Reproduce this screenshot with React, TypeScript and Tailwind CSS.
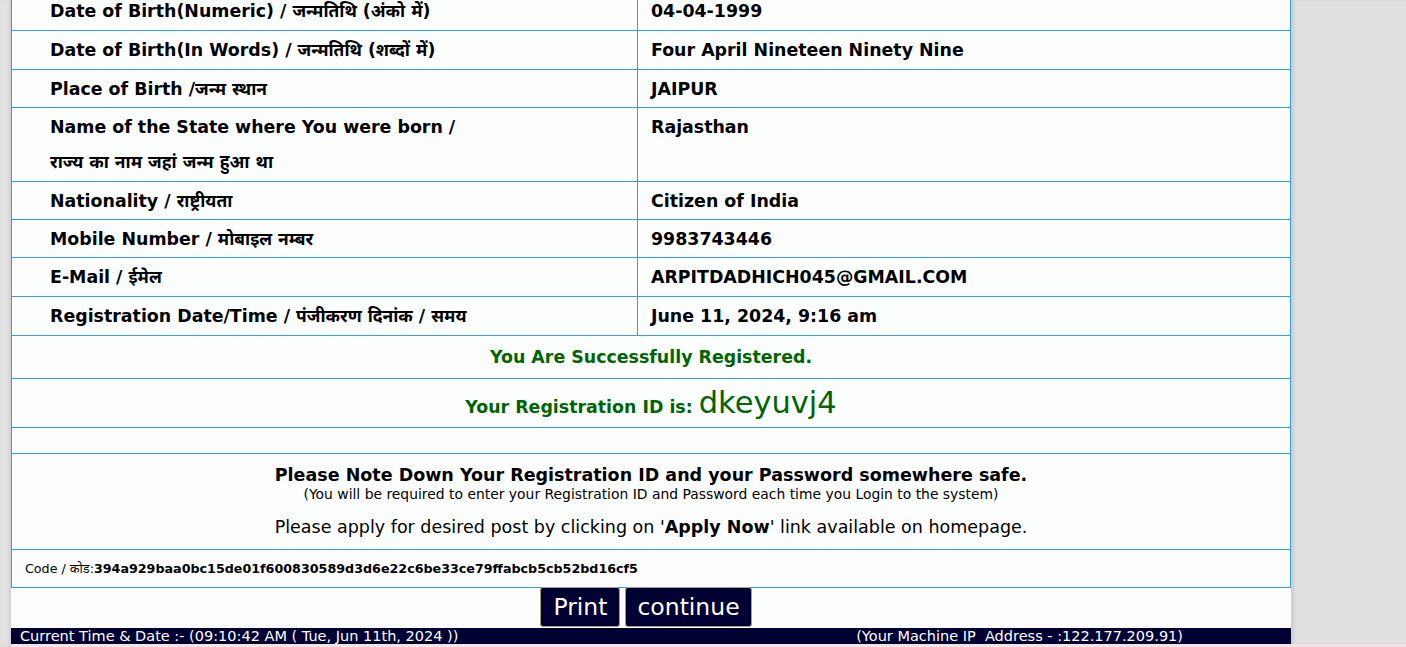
import React from 'react';

interface Row {
  label: React.ReactNode;
  value: string;
  h: string;
}

const rows: Row[] = [
  { label: 'Date of Birth(Numeric) / जन्मतिथि (अंको में)', value: '04-04-1999', h: 'h-[39px]' },
  { label: 'Date of Birth(In Words) / जन्मतिथि (शब्दों में)', value: 'Four April Nineteen Ninety Nine', h: 'h-[39px]' },
  { label: 'Place of Birth /जन्म स्थान', value: 'JAIPUR', h: 'h-[38px]' },
  {
    label: (
      <>
        Name of the State where You were born /<br />
        राज्य का नाम जहां जन्म हुआ था
      </>
    ),
    value: 'Rajasthan',
    h: 'h-[74px]',
  },
  { label: 'Nationality / राष्ट्रीयता', value: 'Citizen of India', h: 'h-[38px]' },
  { label: 'Mobile Number / मोबाइल नम्बर', value: '9983743446', h: 'h-[38px]' },
  { label: 'E-Mail / ईमेल', value: 'ARPITDADHICH045@GMAIL.COM', h: 'h-[39px]' },
  { label: 'Registration Date/Time / पंजीकरण दिनांक / समय', value: 'June 11, 2024, 9:16 am', h: 'h-[39px]' },
];

const font = "font-['DejaVu_Sans','Noto_Sans',sans-serif]";
const line = 'border border-[#2f9fe0]';
const cell = `${line} align-top pt-[2px] pb-0 leading-[35px]`;

export default function App() {
  return (
    <div className={`flex h-[647px] overflow-hidden bg-[#e0e0e0] ${font} text-black`}>
      <div className="w-[11px] shrink-0 bg-[#e2e2e2] shadow-[inset_-2px_0_3px_rgba(0,0,0,0.08)]" />
      <div className="flex w-[1280px] shrink-0 flex-col bg-[#fcfefe]">
        <div className="-mt-[9px] h-[596px] shrink-0">
          <table className="w-full border-collapse text-[17.4px] font-bold">
            <tbody>
              {rows.map((r, i) => (
                <tr key={i} className={r.h}>
                  <td className={`${cell} w-[626px] pl-[38px]`}>{r.label}</td>
                  <td className={`${cell} pl-[13px]`}>{r.value}</td>
                </tr>
              ))}
              <tr className="h-[43px]">
                <td colSpan={2} className={`${line} pt-[1px] text-center align-middle text-[#006400]`}>
                  You Are Successfully Registered.
                </td>
              </tr>
              <tr className="h-[49px]">
                <td colSpan={2} className={`${line} text-center align-middle text-[#006400]`}>
                  Your Registration ID is: <span className="text-[30.5px] font-normal">dkeyuvj4</span>
                </td>
              </tr>
              <tr className="h-[26px]">
                <td colSpan={2} className={line} />
              </tr>
              <tr className="h-[96px]">
                <td colSpan={2} className={`${line} pt-[10px] text-center align-top`}>
                  <div className="text-[17.5px] leading-[22px]">
                    Please Note Down Your Registration ID and your Password somewhere safe.
                  </div>
                  <div className="text-[13.9px] font-normal leading-[16px]">
                    (You will be required to enter your Registration ID and Password each time you Login to the system)
                  </div>
                  <div className="mt-[14px] text-[17.5px] font-normal leading-[22px]">
                    Please apply for desired post by clicking on '<b>Apply Now</b>' link available on homepage.
                  </div>
                </td>
              </tr>
              <tr className="h-[38px]">
                <td colSpan={2} className={`${line} pl-[13px] pt-[1px] align-middle text-[12.7px] font-normal`}>
                  Code / कोड:<b>394a929baa0bc15de01f600830589d3d6e22c6be33ce79ffabcb5cb52bd16cf5</b>
                </td>
              </tr>
            </tbody>
          </table>
        </div>
        <div className="flex h-[41px] shrink-0 items-start justify-center gap-[5px] pr-[10px]">
          <button className="h-[40px] rounded-[3px] border border-[#a89f80] bg-[#000033] px-[12px] pt-[2px] text-[23.5px] text-white">
            Print
          </button>
          <button className="h-[40px] rounded-[3px] border border-[#a89f80] bg-[#000033] px-[11px] pt-[2px] text-[23.5px] text-white">
            continue
          </button>
        </div>
        <div className="flex h-[16px] shrink-0 items-center justify-between bg-[#000033] pl-[9px] pr-[108px] text-[14.5px] leading-[16px] text-white">
          <span>Current Time &amp; Date :- (09:10:42 AM ( Tue, Jun 11th, 2024 ))</span>
          <span>(Your Machine IP&nbsp; Address - :122.177.209.91)</span>
        </div>
        <div className="h-[3px] shrink-0 bg-[#f3e3e7]" />
      </div>
      <div className="flex flex-1 flex-col">
        <div className="flex-1 bg-[#e0e0e0] shadow-[inset_3px_0_3px_rgba(0,0,0,0.08)]" />
        <div className="h-[3px] bg-[#f3e3e7]" />
      </div>
    </div>
  );
}
